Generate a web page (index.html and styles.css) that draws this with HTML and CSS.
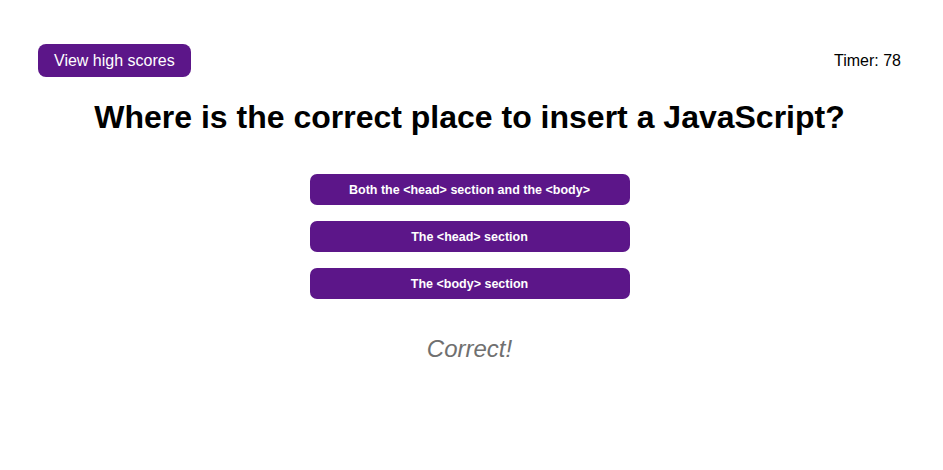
FILE: index.html
```html
<!DOCTYPE html>
<html>
<head>
<meta charset="utf-8">
<link rel="stylesheet" href="styles.css">
</head>
<body>
<header class="top">
  <button class="scores">View high scores</button>
  <div class="timer">Timer: 78</div>
</header>
<main class="quiz">
  <h1 class="question">Where is the correct place to insert a JavaScript?</h1>
  <div class="answers">
    <button class="answer">Both the &lt;head&gt; section and the &lt;body&gt;</button>
    <button class="answer">The &lt;head&gt; section</button>
    <button class="answer">The &lt;body&gt; section</button>
  </div>
  <p class="result">Correct!</p>
</main>
</body>
</html>
```
FILE: styles.css
```css
html, body {
  margin: 0;
  padding: 0;
  background: #fff;
  font-family: "Liberation Sans", Arial, sans-serif;
  color: #000;
}
.top {
  display: flex;
  justify-content: space-between;
  align-items: center;
  padding: 44px 42px 0 38px;
}
.scores {
  background: #5c1689;
  color: #fff;
  border: none;
  border-radius: 8px;
  font-family: inherit;
  font-size: 16px;
  height: 33px;
  padding: 0 16px;
}
.timer {
  font-size: 16px;
}
.quiz {
  display: flex;
  flex-direction: column;
  align-items: center;
  padding-right: 4px;
}
.question {
  margin: 20px 0 0;
  font-size: 32px;
  font-weight: bold;
  line-height: 40px;
}
.answers {
  margin-top: 37px;
  display: flex;
  flex-direction: column;
  gap: 16px;
}
.answer {
  width: 320px;
  height: 31px;
  background: #5c1689;
  color: #fff;
  border: none;
  border-radius: 7px;
  font-family: inherit;
  font-size: 12.5px;
  font-weight: bold;
}
.result {
  margin: 36px 0 0;
  font-size: 24px;
  font-style: italic;
  color: #707070;
}
```
